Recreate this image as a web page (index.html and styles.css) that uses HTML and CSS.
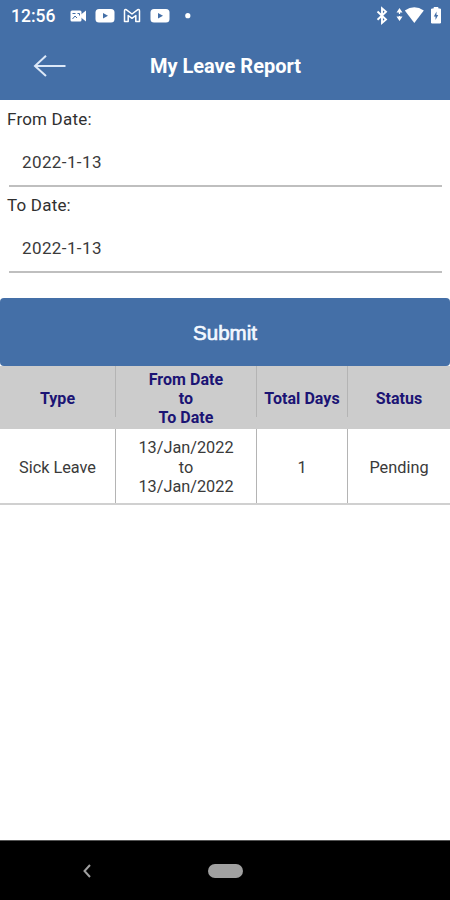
FILE: index.html
```html
<!DOCTYPE html>
<html lang="en">
<head>
<meta charset="utf-8">
<title>My Leave Report</title>
<link rel="stylesheet" href="styles.css">
</head>
<body>
<div class="screen">
  <header class="top">
    <div class="status">
      <span class="clock">12:56</span>
      <svg class="notices" width="124" height="32" viewBox="0 0 124 32">
        <rect x="0.500" y="10.500" width="11" height="11" rx="1.500" fill="#fff"/>
        <path d="M11 14.500l5-4v11l-5-4z" fill="#fff"/>
        <path d="M2.500 13.500h3M2.500 19l2.500-3 2 2M7.500 13.500h2v2" fill="none" stroke="#446fa7" stroke-width="1"/>
        <rect x="25.500" y="9" width="19" height="13.500" rx="3.500" fill="#fff"/>
        <path d="M33 13l5 2.700-5 2.700z" fill="#446fa7"/>
        <path d="M54.500 21.500V11q0-2 2-1.200L62 14l5.500-4.200q2-.8 2 1.200v10.500h-3.700V15.500L62 18.300l-3.800-2.800v6z" fill="none" stroke="#fff" stroke-width="1.500" stroke-linejoin="round"/>
        <rect x="80.500" y="9" width="19" height="13.500" rx="3.500" fill="#fff"/>
        <path d="M88 13l5 2.700-5 2.700z" fill="#446fa7"/>
        <circle cx="117.800" cy="15.700" r="2.600" fill="#fff"/>
      </svg>
      <svg class="system" width="70" height="32" viewBox="0 0 70 32">
        <path d="M2.500 11.500l8.500 8L7 23V8.300l4 3.500-8.500 8" fill="none" stroke="#fff" stroke-width="1.900"/>
        <path d="M24.500 8l3 4.500h-6zM24.500 21l-3-4.500h6z" fill="#fff"/>
        <path d="M23.900 11h1.200v3h-1.200zM23.900 16h1.200v2h-1.200z" fill="#fff"/>
        <path d="M29.800 10.500q9.500-6.500 19 0L39.300 23z" fill="#fff"/>
        <path d="M56.500 9h2.500V7.500h4V9h2.500v14h-9z" fill="#fff" stroke="#fff" stroke-width="1" stroke-linejoin="round"/>
        <path d="M61.500 11.500l-2.700 5h1.700v3.500l2.700-5h-1.700z" fill="#446fa7"/>
      </svg>
    </div>
    <div class="titlebar">
      <svg class="back" width="34" height="24" viewBox="0 0 34 24">
        <path d="M32.500 12H2M13 1.800L2 12l11 10" fill="none" stroke="#dce8f8" stroke-width="2"/>
      </svg>
      <h1>My Leave Report</h1>
    </div>
  </header>
  <main>
    <div class="field">
      <label>From Date:</label>
      <div class="value">2022-1-13</div>
    </div>
    <div class="field">
      <label>To Date:</label>
      <div class="value">2022-1-13</div>
    </div>
    <div class="action"><button type="button">Submit</button></div>
    <div class="row head">
      <div class="cell"><span>Type</span></div>
      <div class="cell"><span>From Date<br>to<br>To Date</span></div>
      <div class="cell"><span>Total Days</span></div>
      <div class="cell"><span>Status</span></div>
    </div>
    <div class="row data">
      <div class="cell">Sick Leave</div>
      <div class="cell">13/Jan/2022<br>to<br>13/Jan/2022</div>
      <div class="cell">1</div>
      <div class="cell">Pending</div>
    </div>
  </main>
  <nav class="navbar">
    <svg width="12" height="16" viewBox="0 0 12 16"><path d="M9 2L3.500 8 9 14" fill="none" stroke="#a0a0a0" stroke-width="2"/></svg>
    <span class="pill"></span>
  </nav>
</div>
</body>
</html>
```

FILE: styles.css
```css
* { box-sizing: border-box; }
body { margin: 0; background: #fff; font-family: Roboto, sans-serif; }
.screen { width: 450px; height: 900px; display: flex; flex-direction: column; overflow: hidden; }
.top { height: 100px; background: #446fa7; color: #fff; flex: none; }
.status { height: 32px; display: flex; align-items: center; padding-left: 11px; }
.clock { width: 59px; font-size: 17.5px; font-weight: 500; line-height: 32px; }
.system { margin-left: 181px; }
.titlebar { height: 68px; display: grid; grid-template-columns: 67px 1fr 66px; align-items: center; }
.back { margin-left: 33px; }
h1 { margin: 0; font-size: 20px; font-weight: 700; line-height: 24px; text-align: center; }
main { flex: 1; color: #3a3a3a; }
.field { height: 86px; padding: 7px 8px 0 7px; }
label { display: block; font-size: 17px; line-height: 25px; color: #303030; letter-spacing: .2px; }
.value { height: 55px; margin-left: 2px; padding-left: 13px; border-bottom: 2px solid #bfbfbf; font-size: 17px; line-height: 61px; letter-spacing: .4px; }
.action { height: 94px; padding-top: 26px; }
button { display: block; width: 100%; height: 68px; padding: 0; border: 0; border-radius: 4px; background: #446fa7; color: #f3f8ff; font: 400 20.5px/70px "Liberation Sans", sans-serif; -webkit-text-stroke: .7px #f3f8ff; }
.row { display: grid; grid-template-columns: 116px 141px 91px 102px; text-align: center; }
.cell { display: flex; align-items: center; justify-content: center; border-right: 1px solid #b4b4b4; }
.cell:last-child { border-right: 0; }
.head { height: 63px; padding-bottom: 12px; background: #ccc; color: #1b1474; font-size: 16px; font-weight: 700; line-height: 19px; letter-spacing: .05px; }
.head .cell { height: 51px; white-space: nowrap; }
.head span { margin-bottom: -14px; }
.data { height: 76px; border-bottom: 2px solid #d0d0d0; font-size: 16.3px; line-height: 19.5px; }
.data .cell { padding-top: 3px; }
.navbar { height: 60px; flex: none; display: flex; align-items: center; padding-left: 81px; background: #000; border-top: 1px solid #555; }
.pill { width: 35px; height: 14px; margin-left: 115px; border-radius: 7px; background: #a0a0a0; }
```
